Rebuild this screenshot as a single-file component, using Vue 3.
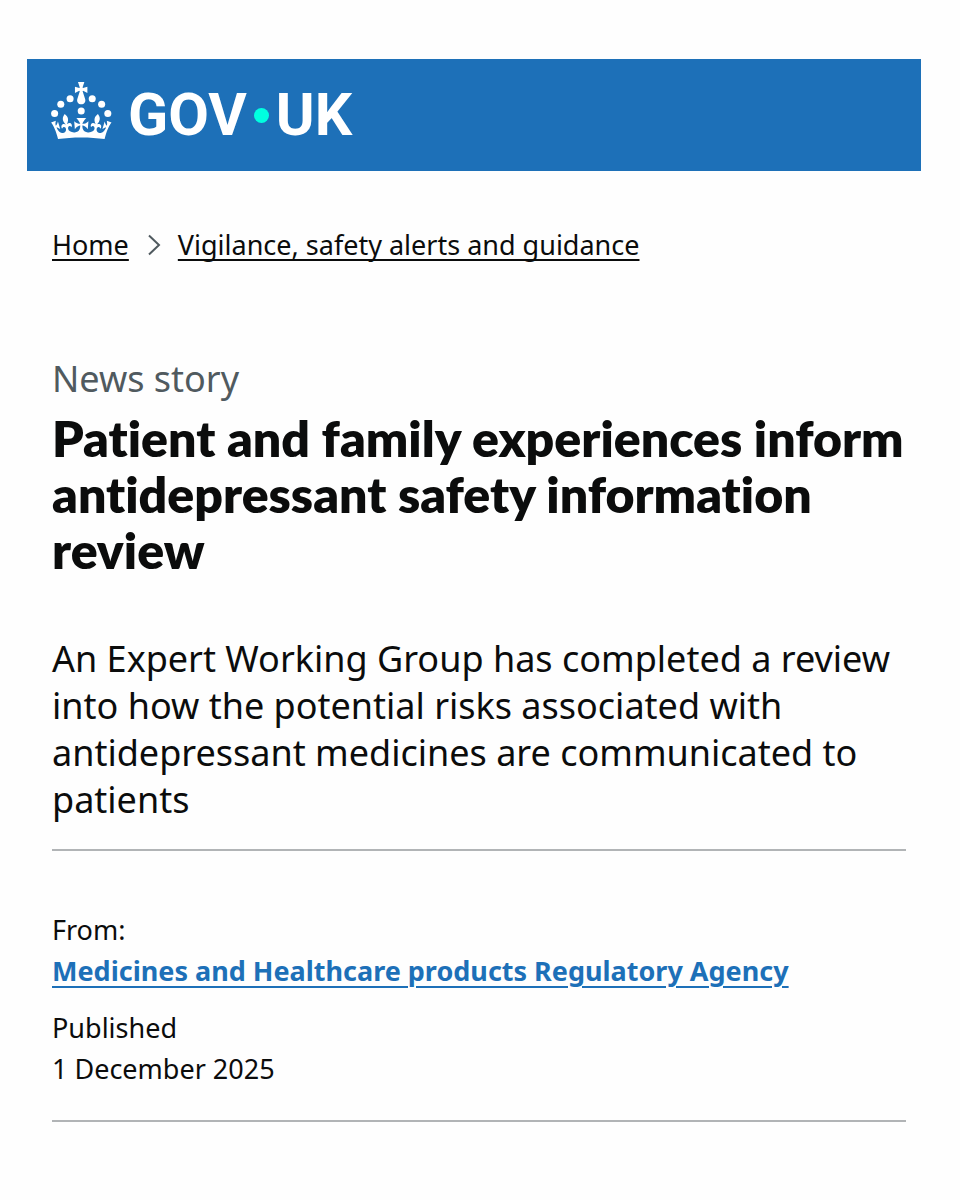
<script setup>
const breadcrumbs = [
  { label: 'Home', href: '#home' },
  { label: 'Vigilance, safety alerts and guidance', href: '#vigilance' }
]
</script>

<template>
  <div class="page">
    <header class="banner">
      <a class="logo" href="#home" aria-label="GOV.UK">
        <svg class="crown" viewBox="0 0 64 60" aria-hidden="true">
          <circle cx="20" cy="17.6" r="3.7" />
          <circle cx="10.2" cy="23.5" r="3.7" />
          <circle cx="3.7" cy="33.2" r="3.7" />
          <circle cx="31.7" cy="30.6" r="3.7" />
          <circle cx="43.3" cy="17.6" r="3.7" />
          <circle cx="53.2" cy="23.5" r="3.7" />
          <circle cx="59.7" cy="33.2" r="3.7" />
          <path d="M33.1,9.8c.2-.1.3-.3.5-.5l4.6,2.4v-6.8l-4.6,1.5c-.1-.2-.3-.3-.5-.5l1.9-5.9h-6.7l1.9,5.9c-.2.1-.3.3-.5.5l-4.6-1.5v6.8l4.6-2.4c.1.2.3.3.5.5l-2.6,8c-.9,2.8,1.2,5.7,4.1,5.7h0c3,0,5.1-2.9,4.1-5.7l-2.6-8ZM37,37.9s-3.4,3.8-4.1,6.1c2.2,0,4.2-.5,6.4-2.8l-.7,8.5c-2-2.8-4.4-4.1-5.7-3.8.1,3.1.5,6.7,5.8,7.2,3.7.3,6.7-1.5,7-3.8.4-2.6-2-4.3-3.7-1.6-1.4-4.5,2.4-6.1,4.9-3.2-1.9-4.5-1.8-7.7,2.4-10.9,3,4,2.6,7.3-1.2,11.1,2.4-1.3,6.2,0,4,4.6-1.2-2.8-3.7-2.2-4.2.2-.3,1.7.7,3.7,3,4.2,1.9.3,4.7-.9,7-5.9-1.3,0-2.4.7-3.9,1.7l2.4-8c.6,2.3,1.4,3.7,2.2,4.5.6-1.6.5-2.8,0-5.3l5,1.8c-2.6,3.6-5.2,8.7-7.3,17.5-7.4-1.1-15.7-1.7-24.5-1.7h0c-8.8,0-17.1.6-24.5,1.7-2.1-8.9-4.7-13.9-7.3-17.5l5-1.8c-.5,2.5-.6,3.7,0,5.3.8-.8,1.6-2.3,2.2-4.5l2.4,8c-1.5-1-2.6-1.7-3.9-1.7,2.3,5,5.2,6.2,7,5.9,2.3-.4,3.3-2.4,3-4.2-.5-2.4-3-3.1-4.2-.2-2.2-4.6,1.6-6,4-4.6-3.7-3.7-4.2-7.1-1.2-11.1,4.2,3.2,4.3,6.4,2.4,10.9,2.5-2.8,6.3-1.3,4.9,3.2-1.8-2.7-4.1-1-3.7,1.6.3,2.3,3.3,4.1,7,3.8,5.4-.5,5.7-4.2,5.8-7.2-1.3-.2-3.7,1-5.7,3.8l-.7-8.5c2.2,2.3,4.2,2.7,6.4,2.8-.7-2.3-4.1-6.1-4.1-6.1h10.6,0Z" />
        </svg>
        <span class="wordmark">
          <span>GOV</span>
          <span class="dot"></span>
          <span>UK</span>
        </span>
      </a>
    </header>

    <div class="content">
      <nav aria-label="Breadcrumb">
        <ol class="breadcrumbs">
          <li v-for="(crumb, i) in breadcrumbs" :key="crumb.label">
            <svg v-if="i > 0" class="chevron" viewBox="0 0 14 22" aria-hidden="true">
              <path d="M2 1.5 L12 11 L2 20.5" />
            </svg>
            <a :href="crumb.href">{{ crumb.label }}</a>
          </li>
        </ol>
      </nav>

      <main>
        <p class="kind">News story</p>
        <h1>Patient and family experiences inform antidepressant safety information review</h1>
        <p class="lead">
          An Expert Working Group has completed a review into how the potential
          risks associated with antidepressant medicines are communicated to patients
        </p>
        <dl class="metadata">
          <dt>From:</dt>
          <dd><a href="#mhra">Medicines and Healthcare products Regulatory Agency</a></dd>
          <dt>Published</dt>
          <dd>1 December 2025</dd>
        </dl>
      </main>
    </div>
  </div>
</template>

<style>
body {
  background: #fefefe;
}
</style>

<style scoped>
.page {
  padding: 59px 39px 48px 27px;
  color: #0b0c0c;
  font-family: "Noto Sans", "Open Sans", sans-serif;
}

.banner {
  display: flex;
  align-items: center;
  height: 112px;
  padding: 0 24px;
  background: #1d70b8;
}

.logo {
  display: flex;
  align-items: center;
  gap: 16px;
  color: #fff;
  text-decoration: none;
}

.crown {
  width: 61px;
  height: 57px;
  margin-bottom: 10px;
  fill: #fff;
}

.wordmark {
  display: flex;
  align-items: center;
  gap: 7px;
  font-family: Roboto, sans-serif;
  font-size: 59px;
  font-weight: 700;
  line-height: 64px;
}

.dot {
  width: 15px;
  height: 15px;
  border-radius: 50%;
  background: #00ffe0;
}

.content {
  padding: 0 15px 0 25px;
}

.breadcrumbs {
  display: flex;
  flex-wrap: wrap;
  margin: 54px 0 0;
  padding: 0;
  list-style: none;
  font-size: 27px;
  line-height: 40px;
}

.breadcrumbs li {
  display: flex;
  align-items: center;
}

.breadcrumbs a {
  color: #0b0c0c;
  text-decoration-thickness: 2px;
  text-underline-offset: 4px;
  text-decoration-skip-ink: none;
}

.chevron {
  width: 14px;
  height: 22px;
  margin: 0 17px 0 18px;
  fill: none;
  stroke: #505a5f;
  stroke-width: 2;
}

.kind {
  margin: 91px 0 0;
  color: #505a5f;
  font-size: 36px;
  line-height: 46px;
}

h1 {
  margin: 8px 0 0;
  font-family: Lato, "Noto Sans", sans-serif;
  font-size: 50px;
  font-weight: 800;
  font-variant-ligatures: none;
  line-height: 56px;
}

.lead {
  margin: 57px 0 0;
  padding-bottom: 26px;
  border-bottom: 2px solid #b1b4b6;
  font-size: 36px;
  line-height: 47px;
}

.metadata {
  margin: 0;
  padding: 58px 0 31px;
  border-bottom: 2px solid #b1b4b6;
  font-size: 27px;
  line-height: 41px;
}

.metadata dd {
  margin: 0;
}

.metadata dd + dt {
  margin-top: 16px;
}

.metadata a {
  color: #1d70b8;
  font-weight: 700;
  text-decoration-thickness: 2px;
  text-underline-offset: 5px;
}
</style>
